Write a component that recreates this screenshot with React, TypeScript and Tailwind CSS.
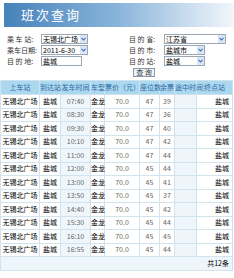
import React from "react";

// --- data ---
const rows = [
  ["07:40", "47", "39"],
  ["08:30", "47", "36"],
  ["09:30", "47", "40"],
  ["10:10", "47", "42"],
  ["11:00", "47", "44"],
  ["12:00", "45", "44"],
  ["13:00", "45", "41"],
  ["13:50", "45", "37"],
  ["14:40", "45", "42"],
  ["15:30", "45", "44"],
  ["16:10", "45", "45"],
  ["16:55", "45", "44"],
];

const cols = [
  { label: "上车站", w: "w-[39px]" },
  { label: "到达站", w: "w-[21px]" },
  { label: "发车时间", w: "w-[30px]" },
  { label: "车型", w: "w-[14px]" },
  { label: "票价（元）", w: "w-[35px]" },
  { label: "座位数", w: "w-[20px]" },
  { label: "余票", w: "w-[15px]" },
  { label: "途中时间", w: "w-[22px]" },
  { label: "终点站", w: "w-[36px]" },
];

const font = { fontFamily: '"SimSun","Noto Sans CJK SC",sans-serif' };

function Select({ value, w }: { value: string; w: string }) {
  return (
    <div className={`flex h-[10px] ${w} items-center border border-[#9aa7b5] bg-white`}>
      <span className="flex-1 whitespace-nowrap pl-[1px] text-[7px] leading-[8px] text-black">{value}</span>
      <span className="flex h-full w-[7px] shrink-0 items-center justify-center bg-[#dbe6f5]">
        <svg width="5" height="4" viewBox="0 0 5 4">
          <path d="M0.5 0.8 L2.5 3 L4.5 0.8" stroke="#3d6cc0" strokeWidth="1.1" fill="none" />
        </svg>
      </span>
    </div>
  );
}

function Label({ children }: { children: React.ReactNode }) {
  return <span className="w-[33px] shrink-0 whitespace-nowrap text-[7px] leading-none text-[#333]">{children}</span>;
}

export default function App() {
  return (
    <div className="h-[278px] w-[234px] overflow-hidden bg-white" style={font}>
      {/* banner */}
      <div className="flex h-[26px] pt-[3px]">
        <div className="ml-[4px] flex h-[24px] flex-1 items-center bg-gradient-to-r from-[#4682bb] via-[#8ab5da] to-[#f3f7fb] pl-[17px]">
          <span className="text-[13px] tracking-[2px] text-white">班次查询</span>
        </div>
      </div>

      {/* form */}
      <div className="mt-[8px] flex">
        <div className="flex w-[122px] flex-col gap-[1px] pl-[7px]">
          <div className="flex items-center gap-[1px]">
            <Label>乘 车 站:</Label>
            <Select value="无锡北广场" w="w-[47px]" />
          </div>
          <div className="flex items-center gap-[1px]">
            <Label>乘车日期:</Label>
            <Select value="2011-6-30" w="w-[47px]" />
          </div>
          <div className="flex items-center gap-[1px]">
            <Label>目 的 地:</Label>
            <div className="h-[10px] w-[41px] border border-[#9aa7b5] bg-white pl-[1px] text-[7px] leading-[8px]">盐城</div>
          </div>
        </div>
        <div className="flex flex-col gap-[1px] pl-[7px]">
          <div className="flex items-center gap-[2px]">
            <Label>目 的 省:</Label>
            <Select value="江苏省" w="w-[62px]" />
          </div>
          <div className="flex items-center gap-[2px]">
            <Label>目 的 市:</Label>
            <Select value="盐城市" w="w-[41px]" />
          </div>
          <div className="flex items-center gap-[2px]">
            <Label>目 的 站:</Label>
            <Select value="盐城" w="w-[41px]" />
          </div>
          <button className="mt-[1px] ml-[4px] h-[9px] w-[22px] whitespace-nowrap border border-[#8a9aab] bg-[#eef3f8] text-[7px] leading-none text-[#333]">
            查 询
          </button>
        </div>
      </div>

      {/* table */}
      <table className="mt-[3px] w-[232px] table-fixed border-collapse whitespace-nowrap text-[7px] leading-none">
        <thead>
          <tr className="h-[14px] bg-[#acd8ef] text-[#2c6aa3]">
            {cols.map((c) => (
              <th key={c.label} className={`${c.w} border border-[#cfe2ef] p-0 font-normal`}>
                {c.label}
              </th>
            ))}
          </tr>
        </thead>
        <tbody>
          {rows.map((r) => (
            <tr key={r[0]} className="h-[13.5px] text-center">
              <td className="border border-[#d3e3ee] p-0 text-black">无锡北广场</td>
              <td className="border border-[#d3e3ee] p-0 text-black">盐城</td>
              <td className="border border-[#d3e3ee] bg-[#eef6fc] p-0 text-[#666]">{r[0]}</td>
              <td className="border border-[#d3e3ee] p-0 text-black">金龙</td>
              <td className="border border-[#d3e3ee] p-0 text-[#666]">70.0</td>
              <td className="border border-[#d3e3ee] p-0 text-[#666]">{r[1]}</td>
              <td className="border border-[#d3e3ee] p-0 text-[#666]">{r[2]}</td>
              <td className="border border-[#d3e3ee] bg-[#eef6fc] p-0"></td>
              <td className="border border-[#d3e3ee] p-0 pr-[3px] text-right text-black">盐城</td>
            </tr>
          ))}
          <tr className="h-[14px] bg-[#eef6fc]">
            <td colSpan={9} className="border border-[#d3e3ee] p-0 pr-[3px] text-right text-black">
              共12条
            </td>
          </tr>
        </tbody>
      </table>
    </div>
  );
}
